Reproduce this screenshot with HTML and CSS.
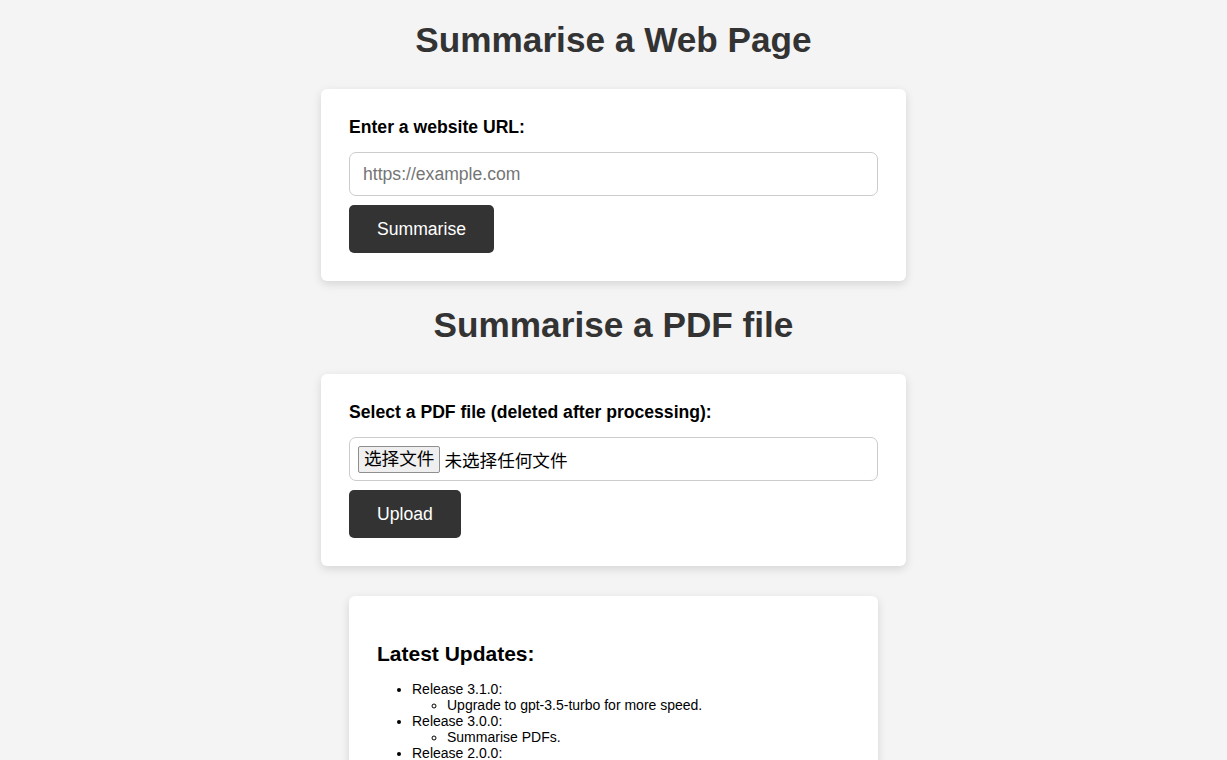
FILE: index.html
```html
<!DOCTYPE html>
<html lang="en">
<head>
  <meta charset="UTF-8">
  <meta name="viewport" content="width=device-width, initial-scale=1.0">
  <title>Summarise</title>
  <link rel="stylesheet" href="styles.css">
</head>
<body>
  <h1>Summarise a Web Page</h1>

  <!-- URL form -->
  <form class="card" action="#" method="post">
    <label for="url" class="field-label">Enter a website URL:</label>
    <input type="text" id="url" name="url" class="text-input" placeholder="https://example.com">
    <button type="submit" class="button">Summarise</button>
  </form>

  <h1>Summarise a PDF file</h1>

  <!-- PDF form -->
  <form class="card" action="#" method="post" enctype="multipart/form-data">
    <label class="field-label">Select a PDF file (deleted after processing):</label>
    <div class="file-field">
      <label class="file-button">选择文件<input type="file" name="pdf" accept=".pdf" class="hidden"></label>
      <span class="file-name">未选择任何文件</span>
    </div>
    <button type="submit" class="button">Upload</button>
  </form>

  <!-- Changelog -->
  <div class="updates">
    <h3>Latest Updates:</h3>
    <ul>
      <li>Release 3.1.0:
        <ul>
          <li>Upgrade to gpt-3.5-turbo for more speed.</li>
        </ul>
      </li>
      <li>Release 3.0.0:
        <ul>
          <li>Summarise PDFs.</li>
        </ul>
      </li>
      <li>Release 2.0.0:
        <ul>
          <li>Summarise longer web pages.</li>
        </ul>
      </li>
    </ul>
  </div>
</body>
</html>
```

FILE: styles.css
```css
:root {
  --bg: #f4f4f4;
  --dark: #333333;
  --border: #cccccc;
}

body {
  font-family: 'Liberation Sans', Arial, sans-serif;
  background-color: var(--bg);
  color: #000;
  margin: 0;
  padding: 0 0 40px;
}

h1 {
  font-size: 35.2px;
  font-weight: bold;
  color: var(--dark);
  text-align: center;
  margin: 20px 0 29px;
}

.card {
  display: flex;
  flex-direction: column;
  align-items: flex-start;
  box-sizing: border-box;
  width: 585px;
  margin: 0 auto 24px;
  padding: 28px;
  background-color: white;
  border-radius: 6px;
  box-shadow: 0 3px 10px rgba(0, 0, 0, 0.13);
}

.field-label {
  display: block;
  font-size: 17.6px;
  font-weight: bold;
  margin-bottom: 14px;
}

.text-input {
  box-sizing: border-box;
  width: 100%;
  height: 44px;
  padding: 0 13px;
  font-family: inherit;
  font-size: 17.6px;
  border: 1px solid var(--border);
  border-radius: 7px;
  margin-bottom: 9px;
}

.text-input::placeholder {
  color: #757575;
}

.file-field {
  box-sizing: border-box;
  width: 100%;
  height: 44px;
  display: flex;
  align-items: center;
  gap: 4px;
  padding: 0 8px;
  border: 1px solid var(--border);
  border-radius: 7px;
  margin-bottom: 9px;
  font-family: 'Liberation Sans', 'Noto Sans CJK SC', sans-serif;
  font-size: 17.6px;
}

.file-button {
  display: inline-block;
  padding: 1px 5px;
  line-height: 23px;
  background-color: #efefef;
  border: 1px solid #8f8f8f;
  border-radius: 2px;
  cursor: pointer;
}

.button {
  background-color: var(--dark);
  color: white;
  border: none;
  border-radius: 5px;
  padding: 0 28px;
  height: 48px;
  font-family: inherit;
  font-size: 17.6px;
  cursor: pointer;
}

.button:hover {
  background-color: #222;
}

.updates {
  box-sizing: border-box;
  width: 529px;
  margin: 30px auto 0;
  padding: 28px;
  background-color: white;
  border-radius: 6px;
  box-shadow: 0 3px 10px rgba(0, 0, 0, 0.13);
}

.updates h3 {
  font-size: 21px;
  margin: 18px 0 15px;
}

.updates ul {
  margin: 0;
  padding-left: 35px;
  font-size: 14px;
  line-height: 16px;
}

.hidden {
  display: none;
}
```
